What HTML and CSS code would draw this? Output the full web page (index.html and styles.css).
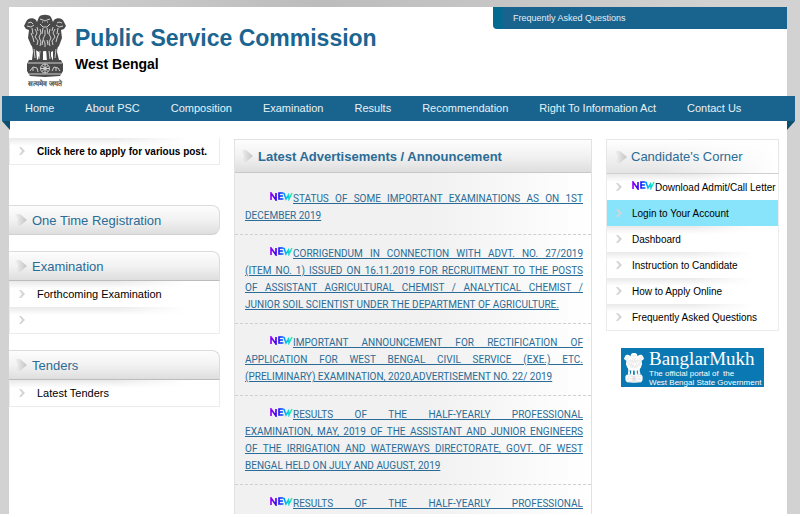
FILE: index.html
```html
<!DOCTYPE html>
<html lang="en">
  <head>
    <meta charset="UTF-8" />
    <meta name="viewport" content="width=device-width, initial-scale=1.0" />
    <title>Public Service Commission, West Bengal</title>
    <link rel="stylesheet" href="styles.css">
  </head>
  <body>
    <!-- shared icons -->
    <svg class="sprite" aria-hidden="true">
      <defs>
        <linearGradient id="arrowFill" x1="0" x2="1" y1="0" y2="0">
          <stop offset="0" stop-color="#f2f2f2" />
          <stop offset="1" stop-color="#c4c4c4" />
        </linearGradient>
        <linearGradient id="newFill" x1="0" x2="22" y1="0" y2="0" gradientUnits="userSpaceOnUse">
          <stop offset="0" stop-color="#9a00ff" />
          <stop offset="0.3" stop-color="#3a00e8" />
          <stop offset="0.5" stop-color="#0030ff" />
          <stop offset="0.7" stop-color="#00b4ff" />
          <stop offset="1" stop-color="#20f8a0" />
        </linearGradient>
        <symbol id="arrow" viewBox="0 0 12 14">
          <path d="M0 1h5l7 6-7 6H0l3-6z" fill="url(#arrowFill)" />
        </symbol>
        <symbol id="chevron" viewBox="0 0 6 8">
          <path d="M0 0h2l4 4-4 4H0l3-4z" fill="#d4d4d4" />
        </symbol>
        <symbol id="new" viewBox="0 0 23 9">
          <path d="M1 8V1l5 7V1M13.500 1H9v6h4.500M9 4h4M14 1l2 6 2.500-4 .5 4 3-6" fill="none" stroke="url(#newFill)" stroke-width="1.600" />
        </symbol>
        <symbol id="lions" viewBox="0 0 42 64">
          <g fill="currentColor">
            <path d="M15 3c2-3 10-3 12 0l2 5 1-2c3-3 9-2 10 2l2 4-2 3-3 1 1 8-3 8-4 4-4 2-6-1-6 1-5-3-3-4-3-7 1-8-3-1-2-3 2-4c1-4 7-5 10-2l1 2z" />
            <path d="M8 30l4 5 1 11H8l1-8zM15 33l4 2v12h-6l2-5zM22 35l5-2v9l2 5h-6zM29 34l5-4-1 8 2 8h-6z" />
            <path d="M5 46h32l2 4v7l-3 5-15 1-15-1-3-5v-7z" />
          </g>
          <g class="lions-detail" fill="none" stroke-width="1">
            <path d="M16 5l3 1 2 1 2-1 3-1M16 10l3 3h4l3-3M18 8h1M23 8h1M4 9l3-1 2 2M33 9l2-1 3 1M3 12l4 1 3-2M32 11l3 2 4-1" />
            <path d="M11 15l2 4-2 4 3 4-1 4M16 15l1 4-2 4 2 5-1 4M21 16v5l-2 4 2 4v4M26 15l-1 5 2 4-2 4 1 4M31 15l-2 4 2 4-3 4 1 4M7 19l2 5 1 4M35 19l-2 5-1 4" />
            <path d="M13 13l1 4M19 14l-1 6M23 14l1 6M29 13l-1 4M8 14l1 6M34 14l-1 6M19 26l-1 5M23 26l1 5" />
            <path d="M10 35l1 9M16 37l-1 8M25 37l1 8M32 35l-1 9M4 49h34M5 60h32" />
            <circle cx="21" cy="54.500" r="4.500" />
            <circle cx="21" cy="54.500" r="1" />
            <path d="M21 50v9M16.500 54.500h9M18 51.500l6 6M24 51.500l-6 6M6 57l3-4 4 1 1 4M28 57l2-4 4 1 2 3M9 57v-3M32 57v-3" />
          </g>
        </symbol>
      </defs>
    </svg>

    <div class="wrapper">
      <header class="header">
        <a class="logo" href="#">
          <svg class="emblem" viewBox="0 0 42 64" role="img" aria-label="Emblem"><use href="#lions" /></svg>
          <span class="motto" lang="hi">सत्यमेव जयते</span>
        </a>
        <div class="title">
          <h1>Public Service Commission</h1>
          <h2>West Bengal</h2>
        </div>
        <div class="top-links">
          <a href="#">Frequently Asked Questions</a>
        </div>
      </header>

      <nav class="menu">
        <a href="#">Home</a>
        <a href="#">About PSC</a>
        <a href="#">Composition</a>
        <a href="#">Examination</a>
        <a href="#">Results</a>
        <a href="#">Recommendation</a>
        <a href="#">Right To Information Act</a>
        <a href="#">Contact Us</a>
      </nav>

      <div class="content">
        <aside class="left">
          <ul class="links apply">
            <li><a href="#"><svg class="chevron"><use href="#chevron" /></svg>Click here to apply for various post.</a></li>
          </ul>
          <section class="block">
            <h3 class="round"><svg class="arrow"><use href="#arrow" /></svg>One Time Registration</h3>
          </section>
          <section class="block">
            <h3><svg class="arrow"><use href="#arrow" /></svg>Examination</h3>
            <ul class="links">
              <li><a href="#"><svg class="chevron"><use href="#chevron" /></svg>Forthcoming Examination</a></li>
              <li><a href="#"><svg class="chevron"><use href="#chevron" /></svg></a></li>
            </ul>
          </section>
          <section class="block">
            <h3><svg class="arrow"><use href="#arrow" /></svg>Tenders</h3>
            <ul class="links">
              <li><a href="#"><svg class="chevron"><use href="#chevron" /></svg>Latest Tenders</a></li>
            </ul>
          </section>
        </aside>

        <main class="news">
          <h3><svg class="arrow"><use href="#arrow" /></svg>Latest Advertisements / Announcement</h3>
          <ul>
            <li><svg class="new"><use href="#new" /></svg><a href="#">STATUS OF SOME IMPORTANT EXAMINATIONS AS ON 1ST DECEMBER 2019</a></li>
            <li><svg class="new"><use href="#new" /></svg><a href="#">CORRIGENDUM IN CONNECTION WITH ADVT. NO. 27/2019 (ITEM NO. 1) ISSUED ON 16.11.2019 FOR RECRUITMENT TO THE POSTS OF&nbsp;ASSISTANT AGRICULTURAL CHEMIST / ANALYTICAL CHEMIST / JUNIOR&nbsp;SOIL SCIENTIST UNDER THE DEPARTMENT OF AGRICULTURE.</a></li>
            <li><svg class="new"><use href="#new" /></svg><a href="#">IMPORTANT ANNOUNCEMENT FOR RECTIFICATION OF APPLICATION FOR WEST BENGAL CIVIL SERVICE (EXE.) ETC. (PRELIMINARY) EXAMINATION, 2020,ADVERTISEMENT NO. 22/ 2019</a></li>
            <li><svg class="new"><use href="#new" /></svg><a href="#">RESULTS OF THE HALF-YEARLY PROFESSIONAL EXAMINATION,&nbsp;MAY, 2019 OF THE ASSISTANT AND JUNIOR ENGINEERS OF&nbsp;THE IRRIGATION AND WATERWAYS DIRECTORATE, GOVT. OF WEST BENGAL&nbsp;HELD ON JULY AND AUGUST, 2019</a></li>
            <li><svg class="new"><use href="#new" /></svg><a href="#">RESULTS OF THE HALF-YEARLY PROFESSIONAL</a></li>
          </ul>
        </main>

        <aside class="right">
          <section class="candidate">
            <h3><svg class="arrow"><use href="#arrow" /></svg>Candidate's Corner</h3>
            <ul class="links">
              <li><a href="#"><svg class="chevron"><use href="#chevron" /></svg><span><svg class="new"><use href="#new" /></svg>Download Admit/Call Letter</span></a></li>
              <li><a class="active" href="#"><svg class="chevron"><use href="#chevron" /></svg>Login to Your Account</a></li>
              <li><a href="#"><svg class="chevron"><use href="#chevron" /></svg>Dashboard</a></li>
              <li><a href="#"><svg class="chevron"><use href="#chevron" /></svg>Instruction to Candidate</a></li>
              <li><a href="#"><svg class="chevron"><use href="#chevron" /></svg>How to Apply Online</a></li>
              <li><a href="#"><svg class="chevron"><use href="#chevron" /></svg>Frequently Asked Questions</a></li>
            </ul>
          </section>
          <a class="portal" href="#">
            <svg class="portal-emblem" viewBox="0 0 42 64" aria-hidden="true"><use href="#lions" /></svg>
            <span class="portal-text">
              <strong>BanglarMukh</strong>
              <span>The official portal of&nbsp; the</span>
              <span>West Bengal State Government</span>
            </span>
          </a>
        </aside>
      </div>
    </div>
  </body>
</html>
```
FILE: styles.css
```css
* {
  box-sizing: border-box;
}
html {
  height: 100%;
  overflow: hidden;
}
body {
  margin: 0;
  height: 100%;
  padding: 7px 13px 0 9px;
  border-bottom: 3px solid #fff;
  background: linear-gradient(90deg, #d2d2d2, #bcbcbc 40%, #d2d2d2 90%) top / 100% 7px no-repeat #d2d2d2;
  font-family: "Liberation Sans", Arial, sans-serif;
  font-size: 11px;
  color: #000;
}
h1, h2, h3, ul {
  margin: 0;
  padding: 0;
}
ul {
  list-style: none;
}
a {
  color: inherit;
  text-decoration: none;
}
.sprite {
  position: absolute;
  width: 0;
  height: 0;
}
.wrapper {
  display: flex;
  flex-direction: column;
  min-height: 100%;
  background: #fff;
}

/* header */
.header {
  display: flex;
  align-items: flex-start;
  height: 89px;
}
.logo {
  width: 42px;
  margin: 7px 9px 0 15px;
  color: #4a4a4a;
  text-align: center;
}
.emblem {
  display: block;
  width: 42px;
  height: 64px;
}
.lions-detail {
  stroke: #d0d0d0;
}
.motto {
  display: block;
  font-size: 7px;
  line-height: 12px;
  font-weight: bold;
  white-space: nowrap;
}
.title {
  padding-top: 17px;
}
.title h1 {
  color: #1b6591;
  font-size: 23px;
  line-height: 28px;
}
.title h2 {
  font-size: 14px;
  line-height: 24px;
}
.top-links {
  width: 294px;
  margin-left: auto;
  padding-left: 20px;
  background: linear-gradient(90deg, #046a90 8px, #19648f 12px);
  border-bottom-left-radius: 4px;
  color: #e4eef4;
  font-size: 9px;
  line-height: 22px;
}

/* menu ribbon */
.menu {
  position: relative;
  display: flex;
  gap: 31px;
  margin: 0 -8px 0 -7px;
  padding-left: 23px;
  background: #19648f;
  color: #e8f1f6;
  line-height: 25px;
  white-space: nowrap;
}
.menu::before,
.menu::after {
  content: "";
  position: absolute;
  top: 100%;
  width: 8px;
  height: 9px;
  background: #0b4f6c;
}
.menu::before {
  left: 0;
  clip-path: polygon(0 0, 100% 0, 100% 100%);
}
.menu::after {
  right: 0;
  clip-path: polygon(0 0, 100% 0, 0 100%);
}

/* columns */
.content {
  flex: 1;
  display: grid;
  grid-template-columns: minmax(0, 211fr) minmax(0, 358fr) minmax(0, 173fr);
  column-gap: 14px;
  padding: 17px 8px 0 0;
}
h3 {
  display: flex;
  align-items: center;
  color: #2a6c97;
  font-size: 13px;
  font-weight: normal;
  background: linear-gradient(#fdfdfd, #f2f2f2 50%, #dedede);
}
.arrow {
  flex: none;
  width: 12px;
  height: 14px;
}
.chevron {
  flex: none;
  width: 6px;
  height: 8px;
}
.new {
  width: 23px;
  height: 9px;
  vertical-align: 1px;
}
.links {
  border: 1px solid #ececec;
  border-top: none;
  font-size: 10px;
}
.links a {
  display: flex;
  align-items: center;
  height: 26px;
  background: linear-gradient(90deg, transparent 50%, #fff 85%), linear-gradient(#e9e9e9, #fff 8px);
  white-space: nowrap;
}

/* left column */
.left h3 {
  height: 30px;
  padding-left: 6px;
  gap: 5px;
  border: 1px solid #dcdcdc;
  border-left: none;
  border-bottom-color: #bcbcbc;
  border-top-right-radius: 8px;
}
.left h3.round {
  border-bottom-right-radius: 8px;
  border-bottom-color: #d0d0d0;
}
.left .links a {
  padding-left: 9px;
  gap: 12px;
}
.left .links {
  font-size: 11px;
}
.block {
  margin-bottom: 16px;
}
.left .apply {
  margin-bottom: 40px;
  font-size: 10px;
  font-weight: bold;
}

/* announcements */
.news {
  border: 1px solid #e2e2e2;
  border-bottom: none;
  margin-top: 1px;
  background: linear-gradient(90deg, #f1f1f1 55%, #fff);
}
.news h3 {
  height: 33px;
  padding-left: 6px;
  gap: 5px;
  border-bottom: 1px solid #c8c8c8;
  font-weight: bold;
}
.news ul {
  padding-top: 7px;
}
.news li {
  padding: 10px 8px 10px 10px;
  border-bottom: 1px dashed #cfcfcf;
  color: #2a6c97;
  font-family: Roboto, "Liberation Sans", sans-serif;
  font-size: 10px;
  line-height: 17px;
  text-align: justify;
  text-indent: 25px;
}
.news li:last-child {
  padding-bottom: 0;
  border-bottom: none;
  text-align-last: justify;
}
.news li a {
  text-decoration: underline;
}

/* right column */
.candidate {
  margin-top: 1px;
}
.right h3 {
  height: 35px;
  padding-left: 8px;
  gap: 4px;
  border: 1px solid #e6e6e6;
  border-bottom-color: #d0d0d0;
  background: linear-gradient(90deg, transparent 30%, #fff), linear-gradient(#fff, #e4e4e4);
}
.right .links a {
  padding-left: 9px;
  gap: 10px;
}
.right .links a.active {
  background: #88e4fb;
}
.portal {
  display: flex;
  align-items: center;
  gap: 5px;
  width: 143px;
  height: 39px;
  margin: 17px auto 0;
  padding: 0 3px;
  background: #0a78b2;
  color: #fff;
}
.portal-emblem {
  flex: none;
  width: 20px;
  height: 34px;
}
.portal .lions-detail {
  stroke: #0a78b2;
}
.portal-text {
  display: flex;
  flex-direction: column;
  font-size: 8px;
  line-height: 9px;
  white-space: nowrap;
}
.portal-text strong {
  font-family: "Liberation Serif", serif;
  font-size: 19px;
  line-height: 20px;
  font-weight: normal;
}
```
